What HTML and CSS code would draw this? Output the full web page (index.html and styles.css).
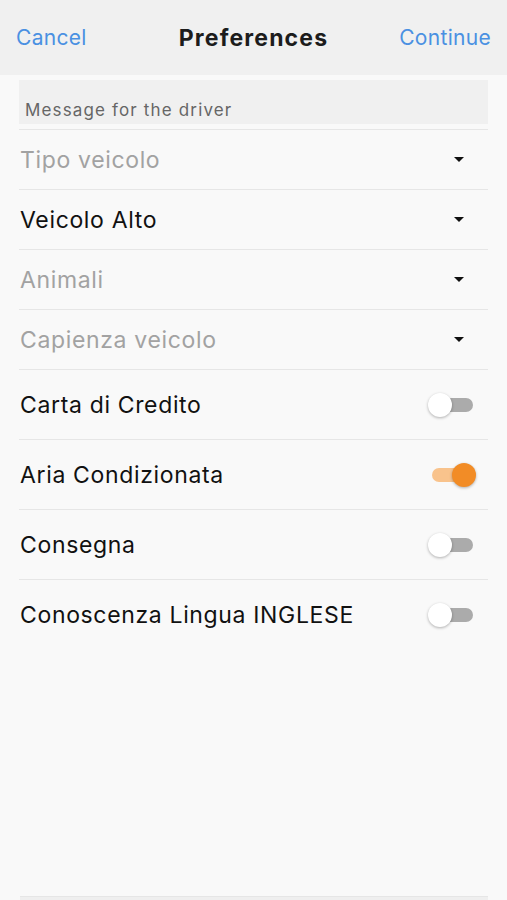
FILE: index.html
```html
<!DOCTYPE html>
<html>
<head>
    <meta charset="UTF-8">
    <title>Preferences</title>
    <link rel="stylesheet" href="styles.css">
</head>
<body>
    <div class="screen">
        <header class="nav">
            <span class="nav-btn">Cancel</span>
            <h1>Preferences</h1>
            <span class="nav-btn right">Continue</span>
        </header>

        <div class="form">
            <div class="message">Message for the driver</div>

            <div class="list">
                <div class="row select">
                    <span class="placeholder">Tipo veicolo</span>
                    <span class="caret"></span>
                </div>
                <div class="row select">
                    <span>Veicolo Alto</span>
                    <span class="caret"></span>
                </div>
                <div class="row select">
                    <span class="placeholder">Animali</span>
                    <span class="caret"></span>
                </div>
                <div class="row select">
                    <span class="placeholder">Capienza veicolo</span>
                    <span class="caret"></span>
                </div>
                <div class="row switch-row">
                    <span>Carta di Credito</span>
                    <span class="switch"><span class="track"></span><span class="knob"></span></span>
                </div>
                <div class="row switch-row">
                    <span>Aria Condizionata</span>
                    <span class="switch on"><span class="track"></span><span class="knob"></span></span>
                </div>
                <div class="row switch-row">
                    <span>Consegna</span>
                    <span class="switch"><span class="track"></span><span class="knob"></span></span>
                </div>
                <div class="row switch-row last">
                    <span>Conoscenza Lingua INGLESE</span>
                    <span class="switch"><span class="track"></span><span class="knob"></span></span>
                </div>
            </div>
        </div>

        <div class="footer"></div>
    </div>
</body>
</html>
```

FILE: styles.css
```css
body {
    margin: 0;
    background: #f9f9f9;
    font-family: Inter, "Liberation Sans", Arial, sans-serif;
    color: #111;
}

.screen {
    display: flex;
    flex-direction: column;
    min-height: 100vh;
}

.nav {
    height: 75px;
    display: grid;
    grid-template-columns: 1fr auto 1fr;
    align-items: center;
    padding: 0 16px;
    background: #f0f0f0;
    box-sizing: border-box;
}

.nav h1 {
    margin: 0;
    font-size: 23px;
    font-weight: 700;
    letter-spacing: 1.15px;
    color: #1c1c1c;
}

.nav-btn {
    font-size: 21px;
    letter-spacing: 0.3px;
    color: #4a90e2;
}

.nav-btn.right {
    text-align: right;
}

.form {
    flex: 1;
    padding: 5px 19px 0 19px;
}

.message {
    height: 44px;
    display: flex;
    align-items: flex-end;
    padding: 0 6px 4px;
    box-sizing: border-box;
    background: #f0f0f0;
    font-size: 17px;
    letter-spacing: 1.15px;
    color: #666;
}

.list {
    margin-top: 5px;
    border-top: 1px solid #e6e6e6;
}

.row {
    display: flex;
    justify-content: space-between;
    align-items: center;
    border-bottom: 1px solid #e6e6e6;
    font-size: 23px;
    letter-spacing: 0.65px;
    padding-left: 1px;
}

.row.last {
    border-bottom: none;
}

.select {
    height: 59px;
    padding-right: 24px;
}

.switch-row {
    height: 69px;
    padding-right: 12px;
}

.placeholder {
    color: #a2a2a2;
}

.caret {
    width: 0;
    height: 0;
    border-left: 5px solid transparent;
    border-right: 5px solid transparent;
    border-top: 5px solid #111;
}

.switch {
    position: relative;
    width: 48px;
    height: 24px;
}

.switch .track {
    position: absolute;
    left: 4px;
    right: 3px;
    top: 5px;
    height: 14px;
    border-radius: 7px;
    background: #ababab;
}

.switch .knob {
    position: absolute;
    left: 0;
    top: 0;
    width: 24px;
    height: 24px;
    border-radius: 50%;
    background: #fff;
    box-shadow: 0 1px 3px rgba(0, 0, 0, 0.3);
}

.switch.on .track {
    background: #f9c38c;
}

.switch.on .knob {
    left: 24px;
    background: #f28c26;
}

.footer {
    height: 3px;
    margin: 0 19px 0 20px;
    border-top: 1px solid #e6e6e6;
    background: #efefef;
}
```
